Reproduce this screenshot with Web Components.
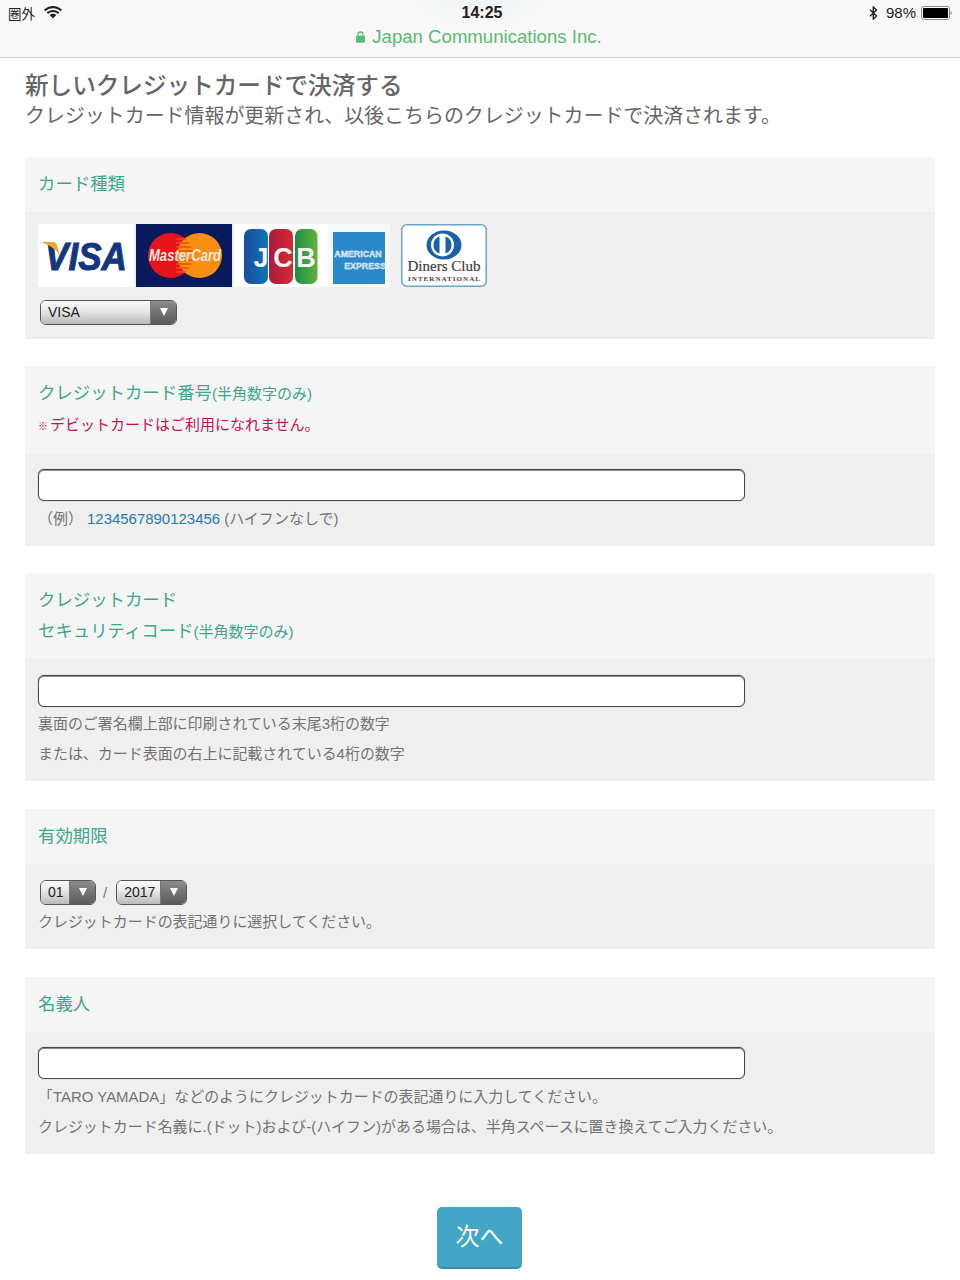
<!DOCTYPE html>
<html lang="ja">
<head>
<meta charset="utf-8">
<title>Japan Communications Inc.</title>
<style>
    html, body { margin: 0; background: #fff; }
    body {
        font-family: "Liberation Sans", "Noto Sans CJK JP", sans-serif;
        color: #666;
    }
    .note { color: #c2134d; font-size: 15px; margin-bottom: 2px; }
    .note small { font-size: 10px; line-height: 1; margin-right: 2px; }
    .sub { font-size: 15px; line-height: 1; }
    .num { color: #1f7ab8; }
    .slash { margin: 0 9px 0 7px; font-size: 15px; color: #777; }
</style>
</head>
<body>

<jc-status-bar carrier="圈外" time="14:25" site="Japan Communications Inc." battery="98%"></jc-status-bar>

<jc-page-title heading="新しいクレジットカードで決済する" lead="クレジットカード情報が更新され、以後こちらのクレジットカードで決済されます。"></jc-page-title>

<jc-form-stack>
    <jc-section>
        <span slot="head">カード種類</span>
        <jc-card-logos></jc-card-logos>
        <jc-row><jc-select value="VISA" width="137"></jc-select></jc-row>
    </jc-section>

    <jc-section>
        <span slot="head">クレジットカード番号<span class="sub">(半角数字のみ)</span></span>
        <span slot="head" class="note"><small>※</small>デビットカードはご利用になれません。</span>
        <jc-field></jc-field>
        <jc-hint>（例） <span class="num">1234567890123456</span> (ハイフンなしで)</jc-hint>
    </jc-section>

    <jc-section wide-gap tight-hints>
        <span slot="head">クレジットカード</span>
        <span slot="head">セキュリティコード<span class="sub">(半角数字のみ)</span></span>
        <jc-field></jc-field>
        <jc-hint>裏面のご署名欄上部に印刷されている末尾3桁の数字</jc-hint>
        <jc-hint>または、カード表面の右上に記載されている4桁の数字</jc-hint>
    </jc-section>

    <jc-section wide-gap>
        <span slot="head">有効期限</span>
        <jc-row>
            <jc-select value="01" width="56"></jc-select>
            <span class="slash">/</span>
            <jc-select value="2017" width="71"></jc-select>
        </jc-row>
        <jc-hint>クレジットカードの表記通りに選択してください。</jc-hint>
    </jc-section>

    <jc-section>
        <span slot="head">名義人</span>
        <jc-field></jc-field>
        <jc-hint>「TARO YAMADA」などのようにクレジットカードの表記通りに入力してください。</jc-hint>
        <jc-hint>クレジットカード名義に.(ドット)および-(ハイフン)がある場合は、半角スペースに置き換えてご入力ください。</jc-hint>
    </jc-section>
</jc-form-stack>

<jc-next-button>次へ</jc-next-button>

<script>
/* iOS style status bar + address line */
class JcStatusBar extends HTMLElement {
    connectedCallback() {
        const a = (n) => this.getAttribute(n) || '';
        this.attachShadow({ mode: 'open' }).innerHTML = `
            <style>
                :host {
                    display: block;
                    height: 57px;
                    border-bottom: 1px solid #cfcfcf;
                    background: radial-gradient(ellipse 70px 26px at 480px 0, #eef3f6, transparent), #f8f8f8;
                    color: #222;
                    font-size: 15px;
                }
                .top {
                    display: grid;
                    grid-template-columns: 1fr auto 1fr;
                    align-items: center;
                    height: 25px;
                    padding: 0 8px;
                }
                .left, .right { display: flex; align-items: center; }
                .left { gap: 9px; font-size: 13.5px; }
                .carrier { font-family: "Noto Sans CJK TC", sans-serif; }
                .right { justify-content: flex-end; }
                .time { font-weight: 700; font-size: 16px; margin-left: 4px; padding-top: 1px; }
                .pct { margin: 0 5px 0 8px; }
                .site {
                    display: flex;
                    justify-content: center;
                    align-items: center;
                    gap: 7px;
                    height: 23px;
                    color: #5cba72;
                    font-size: 18.600px;
                    margin-left: -2px;
                }
            </style>
            <div class="top">
                <div class="left">
                    <span class="carrier">${a('carrier')}</span>
                    <svg width="18" height="13" viewBox="0 0 18 13" fill="#222">
                        <path d="M9 2.2c2.9 0 5.6 1.1 7.6 3L18 3.700C15.600 1.400 12.400 0 9 0S2.400 1.400 0 3.700l1.400 1.500c2-1.900 4.700-3 7.600-3z"/>
                        <path d="M9 6c1.900 0 3.600.7 4.900 1.900l1.500-1.500C13.700 4.800 11.500 3.900 9 3.900s-4.700.9-6.400 2.500l1.500 1.500C5.400 6.700 7.100 6 9 6z"/>
                        <path d="M9 7.800c-1.300 0-2.500.5-3.300 1.300L9 12.600l3.300-3.500C11.500 8.300 10.300 7.800 9 7.800z"/>
                    </svg>
                </div>
                <div class="time">${a('time')}</div>
                <div class="right">
                    <svg width="9" height="14" viewBox="0 0 9 14" fill="none" stroke="#222" stroke-width="1.400">
                        <path d="M1 3.800l6.500 6.300L4.300 13V1l3.200 2.900L1 10.200"/>
                    </svg>
                    <span class="pct">${a('battery')}</span>
                    <svg width="31" height="14" viewBox="0 0 31 14">
                        <rect x=".5" y=".5" width="28" height="13" rx="2.500" fill="#fff" stroke="#888"/>
                        <rect x="2" y="2" width="25" height="10" rx="1" fill="#000"/>
                        <path d="M29.500 5c.9.2 1.200 1 1.200 2s-.3 1.800-1.200 2z" fill="#888"/>
                    </svg>
                </div>
            </div>
            <div class="site">
                <svg width="9" height="12" viewBox="0 0 9 12">
                    <path d="M2 5V3.500a2.500 2.500 0 0 1 5 0V5" fill="none" stroke="#5cba72" stroke-width="1.300"/>
                    <rect y="4.800" width="9" height="7" rx="1" fill="#5cba72"/>
                </svg>
                <span>${a('site')}</span>
            </div>`;
    }
}

class JcPageTitle extends HTMLElement {
    connectedCallback() {
        this.attachShadow({ mode: 'open' }).innerHTML = `
            <style>
                :host { display: block; padding: 13px 25px 0; color: #666; }
                h1 { margin: 0; font-size: 23.600px; line-height: 30px; font-weight: 500; }
                p { margin: 0; font-size: 19.950px; line-height: 30px; }
            </style>
            <h1>${this.getAttribute('heading')}</h1>
            <p>${this.getAttribute('lead')}</p>`;
    }
}

class JcFormStack extends HTMLElement {
    connectedCallback() {
        this.attachShadow({ mode: 'open' }).innerHTML = `
            <style>
                :host { display: flex; flex-direction: column; gap: 27px; padding: 26px 25px 0; }
            </style>
            <slot></slot>`;
    }
}

class JcSection extends HTMLElement {
    connectedCallback() {
        this.attachShadow({ mode: 'open' }).innerHTML = `
            <style>
                :host { display: block; background: #efefef; }
                :host([wide-gap]) { margin-bottom: 1px; }
                .head {
                    display: flex;
                    flex-direction: column;
                    padding: 12px 13px;
                    background: #f5f5f5;
                    color: #3fa68c;
                    font-size: 17.400px;
                    line-height: 31px;
                }
                .body { padding: 12px 13px; }
                :host([tight-hints]) .body { padding-top: 13px; }
                :host([tight-hints]) ::slotted(jc-field) { margin-bottom: 2px; }
                ::slotted(jc-field) { margin-top: 3px; margin-bottom: 3px; }
            </style>
            <div class="head"><slot name="head"></slot></div>
            <div class="body"><slot></slot></div>`;
    }
}

class JcField extends HTMLElement {
    connectedCallback() {
        this.attachShadow({ mode: 'open' }).innerHTML = `
            <style>
                :host { display: block; width: 707px; }
                input {
                    display: block;
                    box-sizing: border-box;
                    width: 100%;
                    height: 32px;
                    padding: 0 8px;
                    border: 1px solid #4a4a4a;
                    border-radius: 6px;
                    background: #fff;
                    box-shadow: inset 0 1px 0 #8a8a8a, 0 0 1px #777;
                    outline: none;
                }
            </style>
            <input type="text">`;
    }
}

class JcHint extends HTMLElement {
    connectedCallback() {
        this.attachShadow({ mode: 'open' }).innerHTML = `
            <style>
                :host { display: block; color: #737373; font-size: 14.960px; line-height: 30px; white-space: nowrap; }
            </style>
            <slot></slot>`;
    }
}

class JcRow extends HTMLElement {
    connectedCallback() {
        this.attachShadow({ mode: 'open' }).innerHTML = `
            <style>
                :host { display: flex; align-items: center; padding-left: 2px; height: 26px; margin: 3px 0 2px; }
            </style>
            <slot></slot>`;
    }
}

class JcSelect extends HTMLElement {
    connectedCallback() {
        const w = this.getAttribute('width');
        this.attachShadow({ mode: 'open' }).innerHTML = `
            <style>
                :host {
                    display: flex;
                    box-sizing: border-box;
                    width: ${w}px;
                    height: 25px;
                    border: 1px solid #555;
                    border-radius: 6px;
                    overflow: hidden;
                    color: #222;
                    font-size: 14px;
                }
                .val {
                    flex: 1;
                    display: flex;
                    align-items: center;
                    padding-left: 7px;
                    background: linear-gradient(#fbfbfb, #e6e6e6 45%, #b9b9b9);
                }
                .btn {
                    display: flex;
                    align-items: center;
                    justify-content: center;
                    width: 25px;
                    background: linear-gradient(#8c8c8c, #5a5a5a);
                    border-left: 1px solid #777;
                }
                .btn i {
                    width: 0; height: 0;
                    border-left: 4.500px solid transparent;
                    border-right: 4.500px solid transparent;
                    border-top: 8px solid #fff;
                }
            </style>
            <div class="val">${this.getAttribute('value')}</div>
            <div class="btn"><i></i></div>`;
    }
}

/* brand marks redrawn as svg, with the wordmarks kept as real text */
class JcCardLogos extends HTMLElement {
    connectedCallback() {
        this.attachShadow({ mode: 'open' }).innerHTML = `
            <style>
                :host { display: flex; align-items: flex-start; height: 63px; margin-bottom: 12px; }
                svg { display: block; flex: none; }
                text { font-family: "Liberation Sans", sans-serif; }
                .serif { font-family: "Liberation Serif", serif; }
            </style>
            <svg width="96" height="63" viewBox="0 0 96 63">
                <rect width="96" height="63" fill="#fff"/>
                <text transform="translate(7 46) scale(.9 1)" font-size="39" font-weight="700" font-style="italic" fill="#14367f" stroke="#14367f" stroke-width="1">VISA</text>
                <path d="M2 18h13c2.500 0 3.700 1.300 4.200 3.500l2.300 9.500C17.500 24.500 9.500 20 2 18z" fill="#f5a623"/>
            </svg>
            <svg width="96" height="63" viewBox="0 0 96 63" style="margin-left:2px">
                <defs>
                    <clipPath id="lens"><circle cx="34.500" cy="31.500" r="22.500"/></clipPath>
                </defs>
                <rect width="96" height="63" fill="#061a5c"/>
                <circle cx="34.500" cy="31.500" r="22.500" fill="#e8141c"/>
                <circle cx="63.500" cy="31.500" r="22.500" fill="#f98e12"/>
                <g clip-path="url(#lens)" stroke="#ee4a1a" stroke-width="1.500">
                    <path d="M40 15h17M40 19h17M40 23h17M40 27h17M40 36h17M40 40h17M40 44h17M40 48h17"/>
                </g>
                <text transform="translate(49 37) scale(.82 1)" text-anchor="middle" font-size="16" font-weight="700" font-style="italic" fill="#f3e6df">MasterCard</text>
            </svg>
            <svg width="94" height="63" viewBox="0 0 94 63" style="margin-left:2px">
                <defs>
                    <linearGradient id="jb" x1="0" x2="1"><stop offset="0" stop-color="#1c4a9c"/><stop offset="1" stop-color="#0a78b8"/></linearGradient>
                    <linearGradient id="jr" x1="0" x2="1"><stop offset="0" stop-color="#a81c3c"/><stop offset="1" stop-color="#d62a32"/></linearGradient>
                    <linearGradient id="jg" x1="0" x2="1"><stop offset="0" stop-color="#1d8c46"/><stop offset="1" stop-color="#62b33a"/></linearGradient>
                </defs>
                <rect width="94" height="63" fill="#fff"/>
                <rect x="10" y="5" width="24" height="55" rx="7" fill="url(#jb)"/>
                <rect x="35" y="5" width="24" height="55" rx="7" fill="url(#jr)"/>
                <rect x="61" y="5" width="22.500" height="55" rx="7" fill="url(#jg)"/>
                <g font-size="27" font-weight="700" fill="#f4f4f4" text-anchor="middle">
                    <text x="27" y="43">J</text>
                    <text x="49" y="43">C</text>
                    <text x="72" y="43">B</text>
                </g>
            </svg>
            <svg width="62" height="63" viewBox="0 0 62 63">
                <rect width="62" height="63" fill="#f7f8f8"/>
                <rect x="5" y="8" width="52" height="52" fill="#2b88c9"/>
                <g font-size="8.800" font-weight="700" fill="#a9d0ec" stroke="#eef5fa" stroke-width=".4" text-anchor="middle">
                    <text x="30" y="33">AMERICAN</text>
                    <text x="37" y="45">EXPRESS</text>
                </g>
            </svg>
            <svg width="86" height="63" viewBox="0 0 86 63" style="margin-left:11px">
                <rect x=".75" y=".75" width="84.500" height="61.500" rx="5" fill="#fff" stroke="#6fa3c7" stroke-width="1.500"/>
                <ellipse cx="43" cy="21" rx="17.500" ry="14.500" fill="#1a62a6"/>
                <circle cx="41.500" cy="21" r="11.500" fill="#fff"/>
                <path d="M38.500 12.500a9 9 0 0 0 0 17zM44.500 12.500a9 9 0 0 1 0 17z" fill="#1a62a6"/>
                <text class="serif" x="43" y="47" text-anchor="middle" font-size="15" fill="#3d3d3d" stroke="#3d3d3d" stroke-width=".2">Diners Club</text>
                <text class="serif" x="7" y="56.500" font-size="7" font-weight="700" fill="#3d3d3d" textLength="72" lengthAdjust="spacing">INTERNATIONAL</text>
            </svg>`;
    }
}

class JcNextButton extends HTMLElement {
    connectedCallback() {
        this.attachShadow({ mode: 'open' }).innerHTML = `
            <style>
                :host {
                    display: flex;
                    align-items: center;
                    justify-content: center;
                    box-sizing: border-box;
                    width: 85px;
                    height: 62px;
                    margin: 53px 0 11px 437px;
                    padding-bottom: 5px;
                    border-radius: 5px;
                    border-bottom: 2px solid #3a8aa8;
                    background: #42a5c6;
                    color: #fff;
                    font-size: 24px;
                }
            </style>
            <slot></slot>`;
    }
}

customElements.define('jc-status-bar', JcStatusBar);
customElements.define('jc-page-title', JcPageTitle);
customElements.define('jc-form-stack', JcFormStack);
customElements.define('jc-section', JcSection);
customElements.define('jc-field', JcField);
customElements.define('jc-hint', JcHint);
customElements.define('jc-row', JcRow);
customElements.define('jc-select', JcSelect);
customElements.define('jc-card-logos', JcCardLogos);
customElements.define('jc-next-button', JcNextButton);
</script>
</body>
</html>
